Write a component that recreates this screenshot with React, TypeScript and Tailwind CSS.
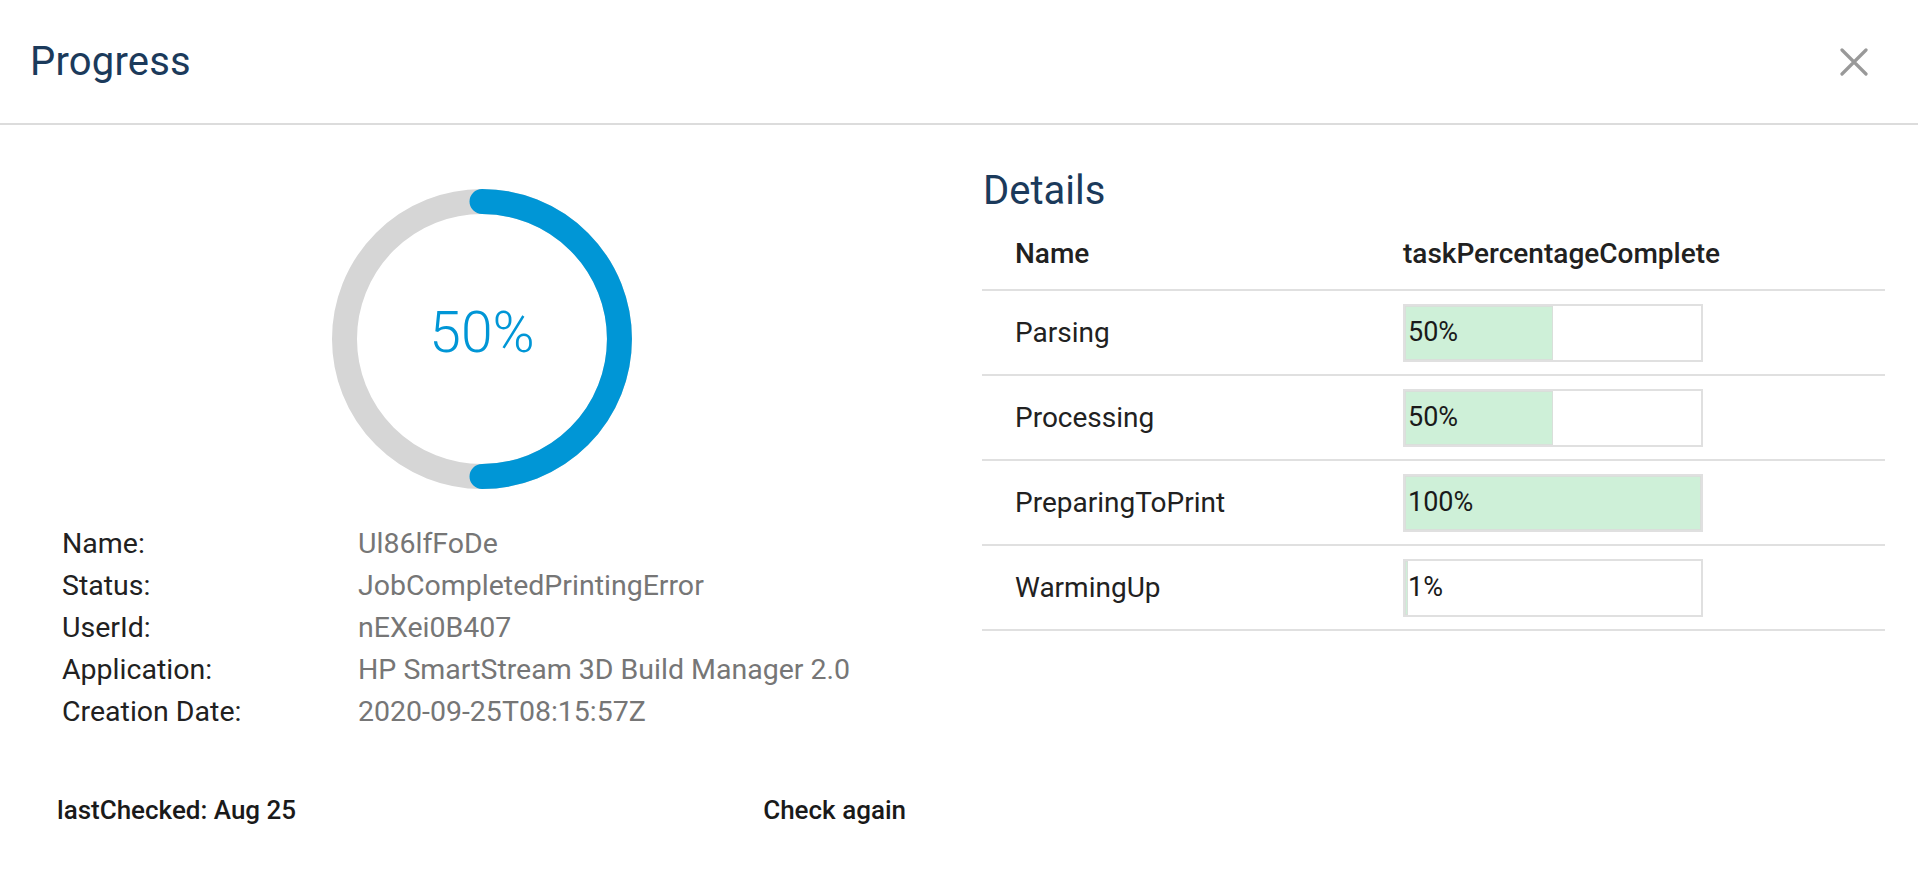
import React from 'react';

const tasks = [
  { name: 'Parsing', pct: 50 },
  { name: 'Processing', pct: 50 },
  { name: 'PreparingToPrint', pct: 100 },
  { name: 'WarmingUp', pct: 1 },
];

const info = [
  ['Name:', 'Ul86lfFoDe'],
  ['Status:', 'JobCompletedPrintingError'],
  ['UserId:', 'nEXei0B407'],
  ['Application:', 'HP SmartStream 3D Build Manager 2.0'],
  ['Creation Date:', '2020-09-25T08:15:57Z'],
];

const Donut: React.FC<{ value: number }> = ({ value }) => {
  return (
    <div className="relative w-[300px] h-[300px]">
      <svg width="300" height="300" viewBox="0 0 300 300">
        <circle cx="150" cy="150" r="137.5" fill="none" stroke="#d6d6d6" strokeWidth="25" />
        <path
          d="M150 12.5 A137.5 137.5 0 0 1 150 287.5"
          fill="none"
          stroke="#0096d6"
          strokeWidth="25"
          strokeLinecap="round"
        />
      </svg>
      <div className="absolute inset-0 flex items-center justify-center pb-[14px] text-[57px] font-light text-[#0096d6] leading-none">
        {value}%
      </div>
    </div>
  );
};

export default function App() {
  return (
    <div className="w-[1918px] h-[888px] bg-white text-[#212121] font-['Roboto','Liberation_Sans',sans-serif] flex flex-col">
      {/* header */}
      <div className="h-[125px] shrink-0 flex items-center justify-between pl-[30px] pr-[48px] border-b-2 border-[#dcdcdc]">
        <h1 className="text-[40px] leading-none text-[#1b3a5b] tracking-[0.2px]">Progress</h1>
        <button className="w-[32px] h-[32px] flex items-center justify-center">
          <svg width="28" height="28" viewBox="0 0 28 28" stroke="#999999" strokeWidth="3.2" strokeLinecap="round">
            <path d="M2 2 L26 26 M26 2 L2 26" />
          </svg>
        </button>
      </div>

      {/* body */}
      <div className="flex flex-1">
        {/* left */}
        <div className="w-[964px] shrink-0 flex flex-col">
          <div className="flex justify-center pt-[64px]">
            <Donut value={50} />
          </div>
          <div className="grid grid-cols-[296px_1fr] pl-[62px] mt-[34px] text-[28.5px] leading-[42px]">
            {info.map(([k, v]) => (
              <React.Fragment key={k}>
                <div className="text-[#212121]">{k}</div>
                <div className="text-[#767676]">{v}</div>
              </React.Fragment>
            ))}
          </div>
          <div className="flex justify-between pl-[57px] pr-[58px] mt-[56px] text-[26px] font-medium leading-[42px] text-[#1a1a1a]">
            <span>lastChecked: Aug 25</span>
            <button className="font-medium">Check again</button>
          </div>
        </div>

        {/* right */}
        <div className="flex-1 pl-[18px] pr-[33px] pt-[42px]">
          <h2 className="text-[40px] leading-[48px] text-[#1b3a5b] pl-[1px]">Details</h2>
          <div className="mt-[4px] text-[28px]">
            <div className="grid grid-cols-[421px_1fr] h-[72px] items-center border-b-2 border-[#e0e0e0] font-medium">
              <div className="pl-[33px]">Name</div>
              <div>taskPercentageComplete</div>
            </div>
            {tasks.map((t) => (
              <div
                key={t.name}
                className="grid grid-cols-[421px_1fr] h-[85px] items-center border-b-2 border-[#e0e0e0]"
              >
                <div className="pl-[33px]">{t.name}</div>
                <div className="relative w-[300px] h-[58px] border-2 border-[#e0e0e0] bg-white">
                  <div className="h-full bg-[#cef0d8] border border-[#d9dfda]" style={{ width: `${t.pct}%` }} />
                  <span className="absolute inset-y-0 left-[3px] flex items-center text-[27px] text-[#1a1a1a]">
                    {t.pct}%
                  </span>
                </div>
              </div>
            ))}
          </div>
        </div>
      </div>
    </div>
  );
}
